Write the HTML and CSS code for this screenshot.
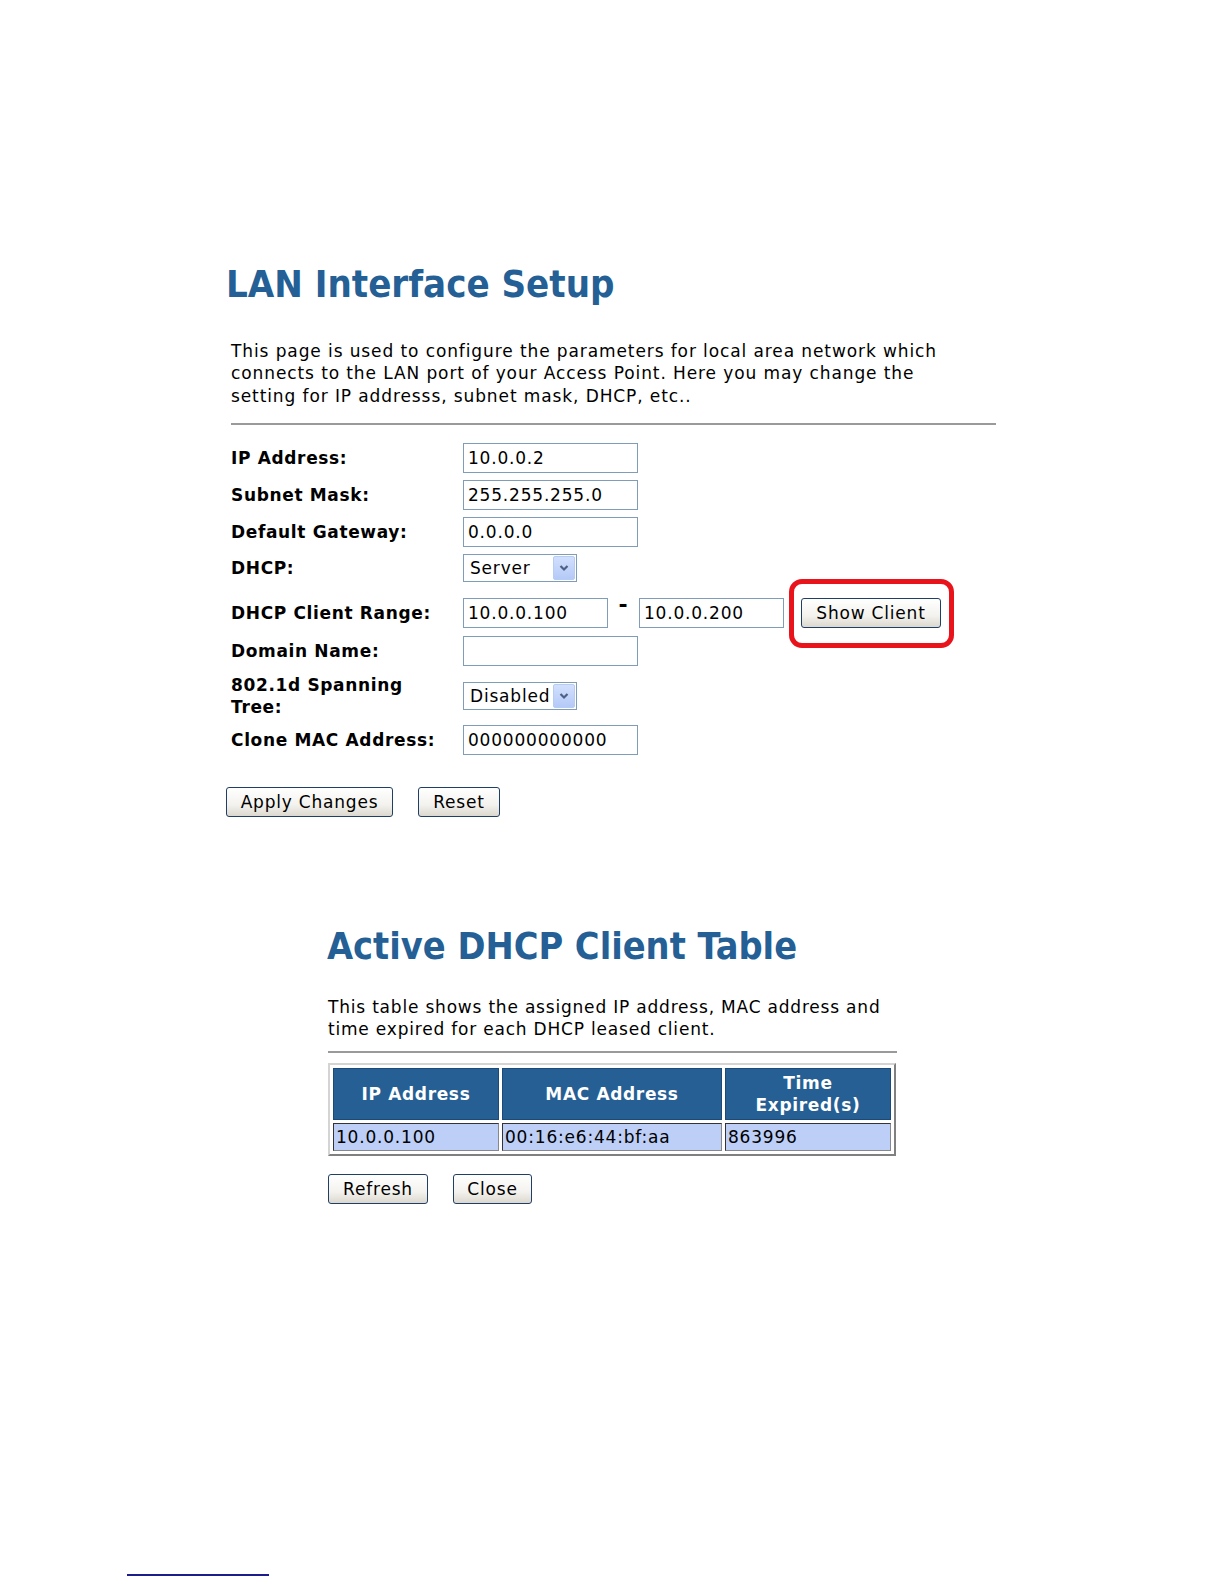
FILE: index.html
```html
<!DOCTYPE html>
<html lang="en">
<head>
    <meta charset="UTF-8">
    <meta name="viewport" content="width=device-width, initial-scale=1.0">
    <title>LAN Interface Setup</title>
    <link rel="stylesheet" href="styles.css">
</head>
<body>
    <div class="section lan-section">
        <h1>LAN Interface Setup</h1>
        <p class="intro">This page is used to configure the parameters for local area network which<br>connects to the LAN port of your Access Point. Here you may change the<br>setting for IP addresss, subnet mask, DHCP, etc..</p>
        <hr>
        <div class="form-grid">
            <label class="label" for="ip">IP Address:</label>
            <div class="field"><input class="text" id="ip" type="text" value="10.0.0.2"></div>

            <label class="label" for="mask">Subnet Mask:</label>
            <div class="field"><input class="text" id="mask" type="text" value="255.255.255.0"></div>

            <label class="label" for="gw">Default Gateway:</label>
            <div class="field"><input class="text" id="gw" type="text" value="0.0.0.0"></div>

            <label class="label">DHCP:</label>
            <div class="field">
                <div class="select select-dhcp"><span class="select-value">Server</span><span class="select-btn"><svg width="10" height="8" viewBox="0 0 10 8"><path d="M1.5 2 L5 5.5 L8.5 2" fill="none" stroke="#4d6185" stroke-width="2.2"/></svg></span></div>
            </div>

            <label class="label label-range">DHCP Client Range:</label>
            <div class="field field-range">
                <input class="text text-short" type="text" value="10.0.0.100">
                <span class="dash">-</span>
                <input class="text text-short" type="text" value="10.0.0.200">
                <span class="highlight"><button class="btn btn-show">Show Client</button></span>
            </div>

            <label class="label label-domain" for="domain">Domain Name:</label>
            <div class="field field-domain"><input class="text" id="domain" type="text" value=""></div>

            <label class="label label-stp">802.1d Spanning<br>Tree:</label>
            <div class="field field-stp">
                <div class="select select-stp"><span class="select-value">Disabled</span><span class="select-btn"><svg width="10" height="8" viewBox="0 0 10 8"><path d="M1.5 2 L5 5.5 L8.5 2" fill="none" stroke="#4d6185" stroke-width="2.2"/></svg></span></div>
            </div>

            <label class="label label-mac" for="mac">Clone MAC Address:</label>
            <div class="field field-mac"><input class="text" id="mac" type="text" value="000000000000"></div>
        </div>
        <div class="actions">
            <button class="btn btn-apply">Apply Changes</button>
            <button class="btn btn-reset">Reset</button>
        </div>
    </div>

    <div class="section dhcp-section">
        <h1>Active DHCP Client Table</h1>
        <p class="intro">This table shows the assigned IP address, MAC address and<br>time expired for each DHCP leased client.</p>
        <hr>
        <table class="client-table">
            <thead>
                <tr>
                    <th class="col-ip">IP Address</th>
                    <th class="col-mac">MAC Address</th>
                    <th class="col-time">Time<br>Expired(s)</th>
                </tr>
            </thead>
            <tbody>
                <tr>
                    <td>10.0.0.100</td>
                    <td>00:16:e6:44:bf:aa</td>
                    <td>863996</td>
                </tr>
            </tbody>
        </table>
        <div class="actions actions-table">
            <button class="btn btn-refresh">Refresh</button>
            <button class="btn btn-close">Close</button>
        </div>
    </div>

    <div class="footnote-rule"></div>
</body>
</html>
```

FILE: styles.css
```css
body {
    font-family: "DejaVu Sans", Verdana, sans-serif;
    font-size: 17px;
    letter-spacing: 0.8px;
    color: #000;
    background: #fff;
    margin: 0;
    padding-top: 262px;
}
.section h1 {
    font-family: "DejaVu Sans Condensed", "DejaVu Sans", sans-serif;
    font-weight: bold;
    letter-spacing: 0;
    color: #245f95;
    margin: 0;
    line-height: 1.2;
}
.lan-section {
    margin-left: 226px;
    width: 770px;
}
.lan-section h1 {
    font-size: 38px;
}
.intro {
    margin: 32px 0 0 5px;
    line-height: 22.7px;
    letter-spacing: 0.9px;
}
hr {
    border: 0;
    border-top: 2px solid #9a9a9a;
    margin: 15px 0 0 5px;
}
.form-grid {
    display: grid;
    grid-template-columns: 232px auto;
    row-gap: 7px;
    align-items: center;
    margin: 18px 0 0 5px;
}
.label {
    font-weight: bold;
    letter-spacing: 0.65px;
    line-height: 22px;
}
.field {
    display: flex;
    align-items: center;
}
.text {
    box-sizing: border-box;
    width: 175px;
    height: 30px;
    border: 1px solid #7f9db9;
    padding: 0 4px;
    font-family: "DejaVu Sans", Verdana, sans-serif;
    font-size: 17px;
    letter-spacing: 0.8px;
    color: #000;
}
.text-short {
    width: 145px;
}
.select {
    box-sizing: border-box;
    display: flex;
    align-items: center;
    justify-content: space-between;
    height: 28px;
    border: 1px solid #7f9db9;
    padding: 0 1px 0 6px;
}
.select-dhcp {
    width: 114px;
}
.select-stp {
    width: 114px;
}
.select-btn {
    box-sizing: border-box;
    width: 22px;
    height: 24px;
    border: 1px solid #b8cbf4;
    border-radius: 2px;
    background: linear-gradient(#d2e0fd, #b4c9f7);
    display: flex;
    align-items: center;
    justify-content: center;
}
.label-range, .field-range {
    margin-top: 9px;
}
.label-domain, .field-domain {
    margin-top: 1px;
}
.field-stp, .label-stp {
    margin-top: 1px;
}
.label-mac, .field-mac {
    margin-top: 0;
}
.dash {
    width: 31px;
    text-align: center;
    font-weight: bold;
    font-size: 22px;
    align-self: flex-start;
    margin-top: -6px;
}
.highlight {
    position: relative;
    margin-left: 17px;
    display: inline-block;
}
.highlight::after {
    content: "";
    position: absolute;
    top: -19px;
    bottom: -20px;
    left: -12px;
    right: -13px;
    border: 5px solid #e8131b;
    border-radius: 13px;
}
.btn {
    box-sizing: border-box;
    height: 30px;
    border: 1px solid #1f3f66;
    border-radius: 3px;
    background: linear-gradient(#ffffff, #f3f2ee 60%, #dcd8cf);
    font-family: "DejaVu Sans", Verdana, sans-serif;
    font-size: 17px;
    letter-spacing: 0.8px;
    color: #000;
    padding: 0 10px;
}
.actions {
    display: flex;
    gap: 25px;
    margin-top: 32px;
}
.btn-apply {
    width: 167px;
}
.btn-reset {
    width: 82px;
}
.btn-show {
    width: 140px;
}
.dhcp-section {
    margin-left: 327px;
    width: 570px;
    margin-top: 107px;
}
.dhcp-section h1 {
    font-size: 37.5px;
}
.dhcp-section .intro {
    margin: 27px 0 0 1px;
    letter-spacing: 0.8px;
}
.dhcp-section hr {
    margin: 10px 0 0 1px;
}
.client-table {
    margin: 10px 0 0 1px;
    width: 568px;
    border: 2px outset #d4d4d4;
    border-spacing: 3px;
}
.client-table th {
    background: #255f94;
    color: #fff;
    font-weight: bold;
    letter-spacing: 0.65px;
    height: 48px;
    border: 1px solid #1b4a78;
    padding: 1px 2px;
    line-height: 22px;
}
.client-table td {
    background: #bdcff6;
    border: 1px inset #888;
    height: 24px;
    padding: 1px 2px;
}
.col-ip {
    width: 160px;
}
.col-mac {
    width: 214px;
}
.actions-table {
    margin: 18px 0 0 1px;
}
.btn-refresh {
    width: 100px;
}
.btn-close {
    width: 79px;
}
.footnote-rule {
    width: 142px;
    height: 2px;
    background: #1c1c8c;
    margin: 370px 0 0 127px;
}
```
